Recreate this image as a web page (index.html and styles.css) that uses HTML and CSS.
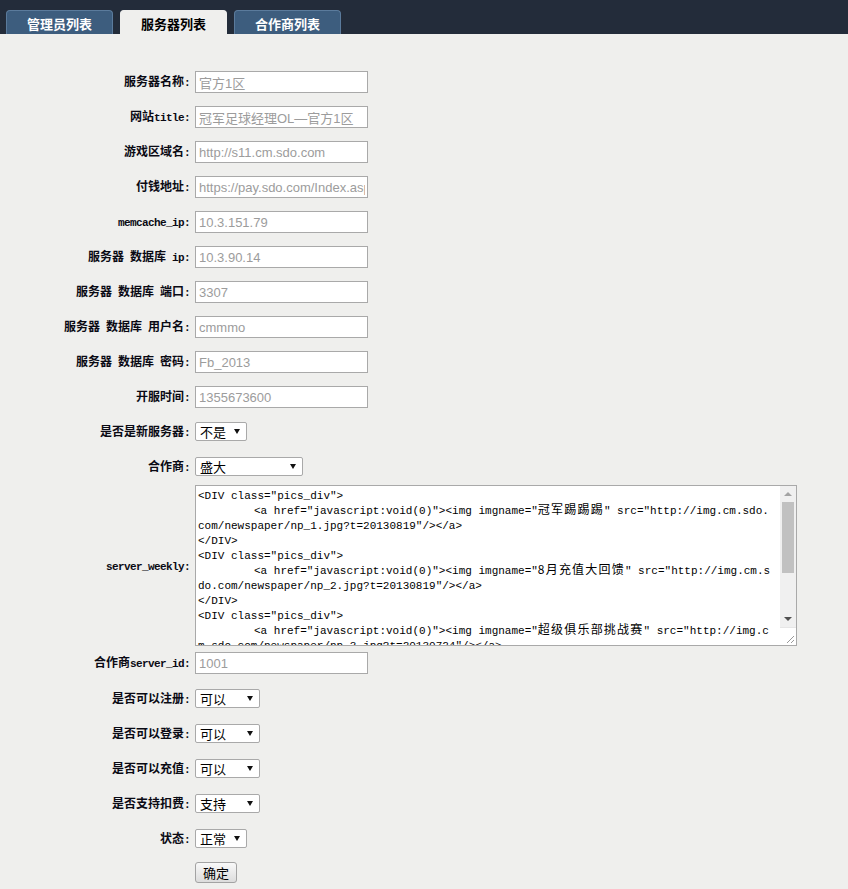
FILE: index.html
```html
<!DOCTYPE html>
<html lang="zh-CN">
<head>
<meta charset="utf-8">
<title>服务器列表</title>
<link rel="stylesheet" href="styles.css">
</head>
<body>
<div class="topbar">
  <div class="tab">管理员列表</div>
  <div class="tab tab-active">服务器列表</div>
  <div class="tab">合作商列表</div>
</div>

<form class="form">
  <div class="row">
    <label class="label">服务器名称<span class="m">:</span></label>
    <input class="inp" type="text" value="官方1区">
  </div>
  <div class="row mt13">
    <label class="label">网站<span class="m">title:</span></label>
    <input class="inp" type="text" value="冠军足球经理OL—官方1区">
  </div>
  <div class="row mt13">
    <label class="label">游戏区域名<span class="m">:</span></label>
    <input class="inp" type="text" value="http://s11.cm.sdo.com">
  </div>
  <div class="row mt13">
    <label class="label">付钱地址<span class="m">:</span></label>
    <input class="inp" type="text" value="https://pay.sdo.com/Index.aspx">
  </div>
  <div class="row mt13">
    <label class="label"><span class="m">memcache_ip:</span></label>
    <input class="inp" type="text" value="10.3.151.79">
  </div>
  <div class="row mt13">
    <label class="label">服务器<span class="m"> </span>数据库<span class="m"> ip:</span></label>
    <input class="inp" type="text" value="10.3.90.14">
  </div>
  <div class="row mt13">
    <label class="label">服务器<span class="m"> </span>数据库<span class="m"> </span>端口<span class="m">:</span></label>
    <input class="inp" type="text" value="3307">
  </div>
  <div class="row mt13">
    <label class="label">服务器<span class="m"> </span>数据库<span class="m"> </span>用户名<span class="m">:</span></label>
    <input class="inp" type="text" value="cmmmo">
  </div>
  <div class="row mt13">
    <label class="label">服务器<span class="m"> </span>数据库<span class="m"> </span>密码<span class="m">:</span></label>
    <input class="inp" type="text" value="Fb_2013">
  </div>
  <div class="row mt13">
    <label class="label">开服时间<span class="m">:</span></label>
    <input class="inp" type="text" value="1355673600">
  </div>
  <div class="row mt14">
    <label class="label">是否是新服务器<span class="m">:</span></label>
    <div class="sel sel-s"><select><option>不是</option><option>是</option></select></div>
  </div>
  <div class="row mt16">
    <label class="label">合作商<span class="m">:</span></label>
    <div class="sel sel-l"><select><option>盛大</option></select></div>
  </div>
  <div class="row mt9">
    <label class="label"><span class="m">server_weekly:</span></label>
    <div class="ta">
      <div class="ta-text">&lt;DIV class="pics_div"&gt;
	&lt;a href="javascript:void(0)"&gt;&lt;img imgname="<span class="cj">冠军踢踢踢</span>" src="http://img.cm.sdo.
com/newspaper/np_1.jpg?t=20130819"/&gt;&lt;/a&gt;
&lt;/DIV&gt;
&lt;DIV class="pics_div"&gt;
	&lt;a href="javascript:void(0)"&gt;&lt;img imgname="<span class="cj">8月充值大回馈</span>" src="http://img.cm.s
do.com/newspaper/np_2.jpg?t=20130819"/&gt;&lt;/a&gt;
&lt;/DIV&gt;
&lt;DIV class="pics_div"&gt;
	&lt;a href="javascript:void(0)"&gt;&lt;img imgname="<span class="cj">超级俱乐部挑战赛</span>" src="http://img.c
m.sdo.com/newspaper/np_3.jpg?t=20130724"/&gt;&lt;/a&gt;</div>
      <div class="sb">
        <div class="sb-btn"><span class="arr-up"></span></div>
        <div class="sb-track"><div class="sb-thumb"></div></div>
        <div class="sb-btn"><span class="arr-down"></span></div>
        <div class="sb-corner">
          <svg width="16" height="17" viewBox="0 0 16 17"><path d="M14 8 L7 15 M14 12 L11 15" stroke="#9a9a9a" stroke-width="1"/></svg>
        </div>
      </div>
    </div>
  </div>
  <div class="row mt6">
    <label class="label">合作商<span class="m">server_id:</span></label>
    <input class="inp" type="text" value="1001">
  </div>
  <div class="row mt15">
    <label class="label">是否可以注册<span class="m">:</span></label>
    <div class="sel sel-m"><select><option>可以</option><option>不可以</option></select></div>
  </div>
  <div class="row mt16">
    <label class="label">是否可以登录<span class="m">:</span></label>
    <div class="sel sel-m"><select><option>可以</option><option>不可以</option></select></div>
  </div>
  <div class="row mt16">
    <label class="label">是否可以充值<span class="m">:</span></label>
    <div class="sel sel-m"><select><option>可以</option><option>不可以</option></select></div>
  </div>
  <div class="row mt16">
    <label class="label">是否支持扣费<span class="m">:</span></label>
    <div class="sel sel-m"><select><option>支持</option><option>不支持</option></select></div>
  </div>
  <div class="row mt16">
    <label class="label">状态<span class="m">:</span></label>
    <div class="sel sel-s"><select><option>正常</option><option>关闭</option></select></div>
  </div>
  <div class="row mt14">
    <span class="label"></span>
    <button class="btn" type="button">确定</button>
  </div>
</form>
</body>
</html>
```

FILE: styles.css
```css
html, body {
  margin: 0;
  padding: 0;
}
body {
  background: #efefed;
  font-family: "Noto Sans CJK SC", "Liberation Sans", sans-serif;
  color: #000;
  height: 889px;
  overflow: hidden;
}

.topbar {
  height: 34px;
  background: #232c3a;
  display: flex;
  align-items: flex-end;
  padding-left: 6px;
  gap: 7px;
  box-sizing: border-box;
}
.tab {
  width: 107px;
  height: 24px;
  box-sizing: border-box;
  border: 1px solid #5b7b9c;
  border-bottom: none;
  border-radius: 4px 4px 0 0;
  background: #3d5d7e;
  color: #fff;
  font-size: 13px;
  font-weight: 700;
  display: flex;
  align-items: center;
  justify-content: center;
  padding-top: 2px;
}
.tab-active {
  background: #efefed;
  border-color: #efefed;
  color: #000;
}

.form {
  display: flex;
  flex-direction: column;
  padding-top: 37px;
  margin: 0;
}
.row {
  display: flex;
  align-items: center;
}
.mt6 { margin-top: 6px; }
.mt9 { margin-top: 9px; }
.mt13 { margin-top: 13px; }
.mt14 { margin-top: 14px; }
.mt15 { margin-top: 15px; }
.mt16 { margin-top: 16px; }

.label {
  width: 190px;
  flex-shrink: 0;
  margin-right: 5px;
  text-align: right;
  font-size: 12px;
  font-weight: 700;
  line-height: 16px;
  white-space: nowrap;
  color: #0a0a14;
}
.m {
  font-family: "Liberation Mono", monospace;
  font-size: 11px;
  letter-spacing: -0.6px;
  font-weight: 700;
}

.inp {
  width: 173px;
  height: 22px;
  box-sizing: border-box;
  border: 1px solid #a9a9a9;
  background: #fff;
  padding: 0 2px 0 3px;
  margin: 0;
  font-family: "Liberation Sans", "Noto Sans CJK SC", sans-serif;
  font-size: 13px;
  color: #9c9c9c;
  outline: none;
}

.sel {
  position: relative;
  display: flex;
}
.sel select {
  appearance: none;
  -webkit-appearance: none;
  height: 19px;
  box-sizing: border-box;
  border: 1px solid #a9a9a9;
  border-radius: 2px;
  background: #fff;
  margin: 0;
  padding: 0 0 0 4px;
  font-family: "Noto Sans CJK SC", sans-serif;
  font-size: 13px;
  line-height: 17px;
  color: #000;
  outline: none;
}
.sel::after {
  content: "";
  position: absolute;
  right: 7px;
  top: 7px;
  border-left: 3px solid transparent;
  border-right: 3px solid transparent;
  border-top: 5px solid #111;
  pointer-events: none;
}
.sel-s select { width: 52px; }
.sel-m select { width: 65px; }
.sel-l select { width: 108px; }

.ta {
  width: 602px;
  height: 161px;
  box-sizing: border-box;
  border: 1px solid #a9a9a9;
  background: #fff;
  display: flex;
  overflow: hidden;
}
.ta-text {
  flex: 1;
  overflow: hidden;
  padding: 3px 0 0 2px;
  font-family: "Liberation Mono", monospace;
  font-size: 11px;
  line-height: 15px;
  white-space: pre;
  tab-size: 56px;
  -moz-tab-size: 56px;
  color: #000;
}
.cj {
  font-family: "Noto Sans CJK SC", sans-serif;
  font-size: 12px;
  letter-spacing: 1.2px;
  line-height: 1px;
}
.sb {
  width: 16px;
  flex-shrink: 0;
  background: #f0f0f0;
  display: flex;
  flex-direction: column;
}
.sb-btn {
  height: 16px;
  display: flex;
  align-items: center;
  justify-content: center;
}
.arr-up {
  border-left: 4px solid transparent;
  border-right: 4px solid transparent;
  border-bottom: 4px solid #a3a3a3;
}
.arr-down {
  border-left: 4px solid transparent;
  border-right: 4px solid transparent;
  border-top: 4px solid #505050;
}
.sb-track {
  height: 110px;
  padding: 0 2px;
}
.sb-thumb {
  height: 71px;
  background: #c1c1c1;
}
.sb-corner {
  flex: 1;
  background: #fff;
  border-top: 1px solid #e6e6e6;
  display: flex;
  align-items: flex-end;
}
.sb-corner svg {
  display: block;
}

.btn {
  width: 42px;
  height: 21px;
  box-sizing: border-box;
  border: 1px solid #a3a3a3;
  border-radius: 3px;
  background: linear-gradient(#f9f9f9, #dcdcdc);
  margin: 0;
  padding: 0;
  font-family: "Noto Sans CJK SC", sans-serif;
  font-size: 13px;
  line-height: 17px;
  color: #000;
}
```
